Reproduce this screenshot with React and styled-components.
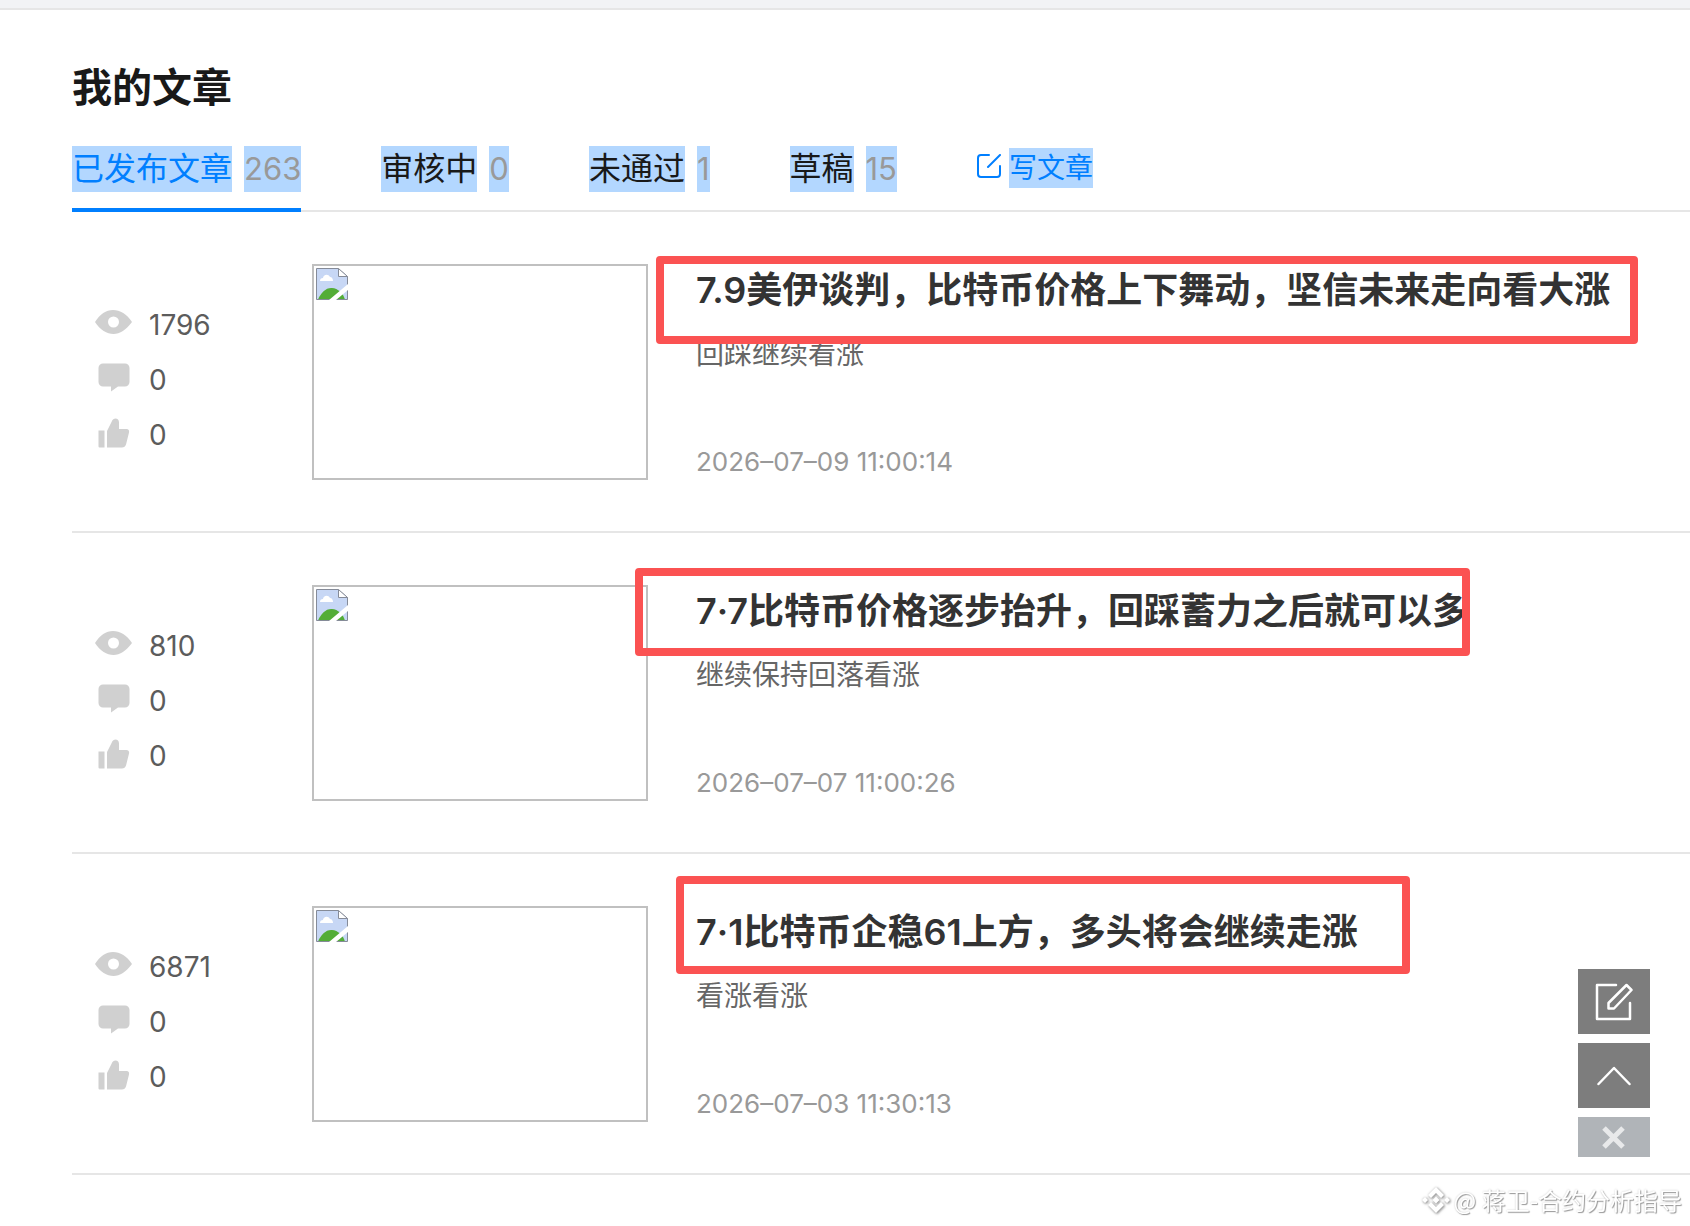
import React from 'react';
import styled, { createGlobalStyle } from 'styled-components';

const GlobalStyle = createGlobalStyle`
  * {
    box-sizing: border-box;
  }

  body {
    margin: 0;
    background: #fff;
    font-family: Inter, "Noto Sans CJK SC", sans-serif;
  }
`;

const TopBar = styled.div`
  height: 10px;
  background: #f2f3f5;
  border-bottom: solid 2px #e6e6e6;
`;

const Page = styled.main`
  padding: 50px 0 0 72px;
`;

const PageTitle = styled.h1`
  margin: 0;
  font-size: 40px;
  line-height: 56px;
  font-weight: 600;
  color: #191919;
`;

const TabBar = styled.nav`
  display: flex;
  align-items: flex-start;
  gap: 80px;
  height: 66px;
  margin-top: 30px;
  border-bottom: solid 2px #e6e6e6;
`;

const Tab = styled.a`
  display: flex;
  gap: 12px;
  height: 66px;
  font-size: 32px;
  line-height: 46px;
  white-space: nowrap;
  text-decoration: none;
  color: ${props => props.$active ? "#007fff" : "#191919"};
  border-bottom: solid 4px ${props => props.$active ? "#007fff" : "transparent"};
`;

const Selected = styled.span`
  height: 46px;
  background: #b3d7ff;
`;

const Count = styled(Selected)`
  font-size: 31px;
  color: #999;
`;

const WriteLink = styled.a`
  display: flex;
  gap: 8px;
  padding-top: 2px;
  font-size: 28px;
  line-height: 40px;
  white-space: nowrap;
  text-decoration: none;
  color: #007fff;

  svg {
    margin-top: 6px;
  }

  span {
    height: 40px;
    background: #b3d7ff;
  }
`;

const List = styled.ul`
  margin: 0;
  padding: 0;
  list-style: none;
`;

const Row = styled.li`
  display: flex;
  padding: 52px 0 51px;
  border-bottom: solid 2px #e6e6e6;
`;

const Stats = styled.div`
  width: 240px;
  flex-shrink: 0;
  padding: 34px 0 0 22px;
`;

const Stat = styled.div`
  display: flex;
  gap: 17px;
  height: 55px;
  font-size: 28px;
  line-height: 55px;
  color: #5c5c5c;

  svg {
    margin-top: 5px;
  }
`;

const Cover = styled.div`
  width: 336px;
  height: 216px;
  flex-shrink: 0;
  padding: 2px;
  border: solid 2px #c0c0c0;
`;

const Body = styled.div`
  position: relative;
  flex: 1;
  min-width: 0;
  margin-left: 48px;
  white-space: nowrap;
`;

const ArticleTitle = styled.h2`
  margin: 0;
  font-size: 36px;
  line-height: 52px;
  font-weight: 600;
  color: #333;
`;

const Summary = styled.p`
  margin: 18px 0 0;
  font-size: 28px;
  line-height: 40px;
  color: #666;
`;

const PublishTime = styled.time`
  display: block;
  margin-top: 70px;
  font-size: 26px;
  line-height: 36px;
  color: #999;
`;

// red frame drawn over the article title
const Marker = styled.div`
  position: absolute;
  left: ${props => props.$left}px;
  top: ${props => props.$top}px;
  width: ${props => props.$width}px;
  height: ${props => props.$height}px;
  border: solid 8px #fb5252;
  border-radius: 4px;
`;

const FloatBar = styled.div`
  position: fixed;
  right: 40px;
  bottom: 69px;
  display: flex;
  flex-direction: column;
  gap: 9px;
`;

const FloatButton = styled.button`
  display: flex;
  align-items: center;
  justify-content: center;
  width: 72px;
  height: ${props => props.$small ? 40 : 65}px;
  padding: 0;
  border: none;
  cursor: pointer;
  background: ${props => props.$small ? "#b0b4b8" : "#7d7d7d"};
`;

const Watermark = styled.div`
  position: fixed;
  right: 8px;
  bottom: 8px;
  display: flex;
  align-items: center;
  gap: 4px;
  font-family: "Noto Sans CJK SC", sans-serif;
  font-size: 24px;
  line-height: 36px;
  white-space: nowrap;
  color: #fff;
  text-shadow: 1px 1px 1px #999, 0 0 2px #ccc;

  svg {
    filter: drop-shadow(1px 1px 1px #999) drop-shadow(0 0 1px #ccc);
  }
`;

const WriteIcon = () => (
  <svg width="24" height="24" viewBox="0 0 24 24" fill="none" stroke="#007fff" strokeWidth="2" strokeLinecap="round">
    <path d="M12 1H4a3 3 0 0 0-3 3v16a3 3 0 0 0 3 3h16a3 3 0 0 0 3-3v-8" />
    <path d="M23 1L11 13" />
  </svg>
);

const EyeIcon = () => (
  <svg width="38" height="38" viewBox="0 0 38 38">
    <path
      fill="#d0d0d0"
      fillRule="evenodd"
      d="M1 19C6 11 12 7 19 7s14 4 19 12C32 27 26 31 19.500 31S6 27 1 19zm18.500-5.500a5.500 5.500 0 1 0 0 11a5.500 5.500 0 1 0 0-11z"
    />
  </svg>
);

const CommentIcon = () => (
  <svg width="38" height="38" viewBox="0 0 38 38">
    <path
      fill="#d0d0d0"
      d="M9 5.500h22a4.500 4.500 0 0 1 4.500 4.500v14a4.500 4.500 0 0 1-4.500 4.500h-7l-7 5v-5H9a4.500 4.500 0 0 1-4.500-4.500V10A4.500 4.500 0 0 1 9 5.500z"
    />
  </svg>
);

const LikeIcon = () => (
  <svg width="38" height="38" viewBox="0 0 38 38">
    <path fill="#d0d0d0" d="M4.500 17.500h6V34.500h-5a1 1 0 0 1-1-1z" />
    <path
      fill="#d0d0d0"
      d="M13 18l4.500-9c1-3 2.500-3.500 4-3.500c2 0 3.500 1.500 3.500 4V16h7.500c2 0 3 1.500 2.500 3.500L32 31.500c-.7 2-2 3-4 3H13z"
    />
  </svg>
);

const BrokenImage = () => (
  <svg width="32" height="32" viewBox="0 0 32 32">
    <path fill="#c7d7f5" d="M0.500 0.500h21.500l9.500 8v23h-31z" />
    <path fill="#fff" d="M4 13c0-2 1-3 3-3c0-3 5-5 7-1c2 0 3 2 3 4z" />
    <path fill="#53ad37" d="M2 31.500c3-7 8-12 14-11.500s11 5 13 11.500z" />
    <path fill="none" stroke="#858b98" d="M0.500 31.500V0.500H22L31.500 8.500v23z" />
    <path fill="#fff" stroke="#858b98" d="M22.500 0.500v8h9z" />
    <path fill="#fff" d="M13 32l19-16v6L20 32z" />
  </svg>
);

const EditIcon = () => (
  <svg width="38" height="38" viewBox="0 0 38 38" fill="none" stroke="#fff" strokeWidth="2.500" strokeLinecap="round" strokeLinejoin="round">
    <path d="M21 2H2v34h33V20" />
    <path d="M31.500 2L36.500 7L19 25.500h-5.500V20z" />
  </svg>
);

const UpIcon = () => (
  <svg width="34" height="20" viewBox="0 0 34 20" fill="none" stroke="#fff" strokeWidth="2.500" strokeLinecap="round" strokeLinejoin="round">
    <path d="M1.500 18L17 2l15.500 16" />
  </svg>
);

const CloseIcon = () => (
  <svg width="24" height="24" viewBox="0 0 24 24" stroke="#e8e9ea" strokeWidth="5">
    <path d="M2 3l19 19M21 3L2 22" />
  </svg>
);

const LogoIcon = () => (
  <svg width="28" height="28" viewBox="0 0 28 28" fill="#fff">
    <path d="M14 1l8 8-3 3-5-5-5 5-3-3z" />
    <path d="M14 27l8-8-3-3-5 5-5-5-3 3z" />
    <path d="M3 11l3 3-3 3-3-3zM25 11l3 3-3 3-3-3zM14 10.500l3.500 3.500-3.500 3.500-3.500-3.500z" />
  </svg>
);

const tabs = [
  { name: '已发布文章', count: 263, active: true },
  { name: '审核中', count: 0 },
  { name: '未通过', count: 1 },
  { name: '草稿', count: 15 },
];

const articles = [
  {
    title: '7.9美伊谈判，比特币价格上下舞动，坚信未来走向看大涨',
    summary: '回踩继续看涨',
    time: '2026–07–09 11:00:14',
    views: 1796,
    marker: { left: -40, top: -8, width: 982, height: 88 },
  },
  {
    title: '7·7比特币价格逐步抬升，回踩蓄力之后就可以多',
    summary: '继续保持回落看涨',
    time: '2026–07–07 11:00:26',
    views: 810,
    marker: { left: -61, top: -17, width: 835, height: 88 },
  },
  {
    title: '7·1比特币企稳61上方，多头将会继续走涨',
    summary: '看涨看涨',
    time: '2026–07–03 11:30:13',
    views: 6871,
    marker: { left: -20, top: -30, width: 734, height: 98 },
  },
];

const ArticleRow = ({ article }) => {
  const { title, summary, time, views, marker } = article;

  return (
    <Row>
      <Stats>
        <Stat><EyeIcon />{views}</Stat>
        <Stat><CommentIcon />0</Stat>
        <Stat><LikeIcon />0</Stat>
      </Stats>
      <Cover><BrokenImage /></Cover>
      <Body>
        <ArticleTitle>{title}</ArticleTitle>
        <Summary>{summary}</Summary>
        <PublishTime>{time}</PublishTime>
        <Marker $left={marker.left} $top={marker.top} $width={marker.width} $height={marker.height} />
      </Body>
    </Row>
  );
};

const App = () => (
  <>
    <GlobalStyle />
    <TopBar />
    <Page>
      <PageTitle>我的文章</PageTitle>
      <TabBar>
        {tabs.map(tab => (
          <Tab key={tab.name} href="#" $active={tab.active}>
            <Selected>{tab.name}</Selected>
            <Count>{tab.count}</Count>
          </Tab>
        ))}
        <WriteLink href="#">
          <WriteIcon />
          <span>写文章</span>
        </WriteLink>
      </TabBar>
      <List>
        {articles.map(article => <ArticleRow key={article.time} article={article} />)}
      </List>
    </Page>
    <FloatBar>
      <FloatButton aria-label="写文章"><EditIcon /></FloatButton>
      <FloatButton aria-label="回到顶部"><UpIcon /></FloatButton>
      <FloatButton aria-label="关闭" $small><CloseIcon /></FloatButton>
    </FloatBar>
    <Watermark>
      <LogoIcon />
      <span>@ 蒋卫-合约分析指导</span>
    </Watermark>
  </>
);

export default App;
